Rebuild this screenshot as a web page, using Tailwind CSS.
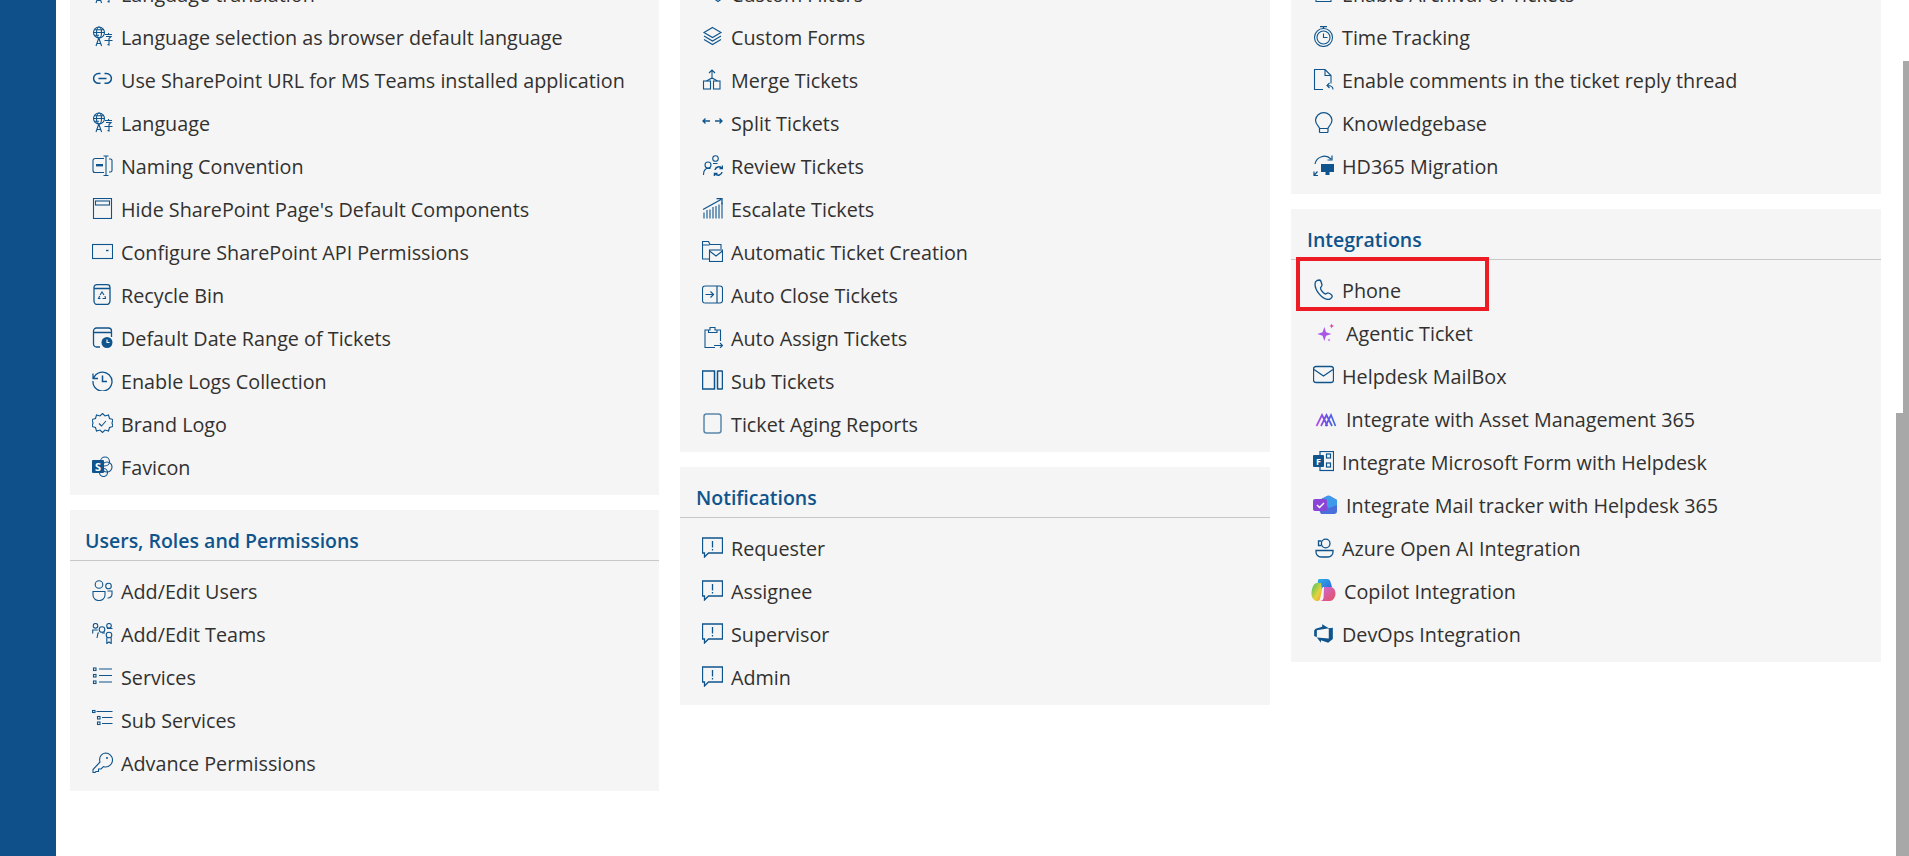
<!DOCTYPE html>
<html lang="en">
<head>
  <meta charset="UTF-8" />
  <title>Helpdesk Settings</title>
  <script src="https://cdn.jsdelivr.net/npm/@tailwindcss/browser@4"></script>
</head>
<body class="bg-white overflow-hidden font-['Open_Sans',sans-serif] text-[#323130]">
  <!-- icon sprites, 21px box -->
  <svg class="hidden" xmlns="http://www.w3.org/2000/svg">
    <symbol id="i-lang" viewBox="0 0 21 21"><circle cx="7" cy="6.5" r="5.5"/><ellipse cx="7" cy="6.5" rx="2.5" ry="5.5"/><path d="M1.5 6.5h11M2 3.8h10M2 9.2h5M4 20l2.8-8 2.8 8M5 17.5h3.6M13 8.5h7M16.5 7v1.500M14 10.5h5l-2 2V19l-1.5-.5M12.5 14.5h8"/></symbol>
    <symbol id="i-link" viewBox="0 0 21 21"><path d="M8.5 4.5h-2a4.9 4.9 0 0 0 0 9.8h2M12.5 4.5h2a4.9 4.9 0 0 1 0 9.8h-2M6.5 9.4h8" stroke-width="1.500"/></symbol>
    <symbol id="i-naming" viewBox="0 0 21 21"><path d="M12 3.5H3a2 2 0 0 0-2 2v10a2 2 0 0 0 2 2h9M11.5 1h5M11.5 20.5h5M14 1v19.5M17 4h1.5A1.5 1.5 0 0 1 20 5.5v10a1.5 1.5 0 0 1-1.5 1.5H17"/><rect x="4" y="9" width="7" height="2.400" fill="#0f548c" stroke="none"/></symbol>
    <symbol id="i-page" viewBox="0 0 21 21"><rect x="1.5" y=".5" width="18" height="20"/><rect x="3.5" y="3" width="14" height="4"/></symbol>
    <symbol id="i-config" viewBox="0 0 21 21"><rect x=".5" y="3.5" width="20" height="14"/><path d="M14 9.5h2.500" stroke-width="1.400"/></symbol>
    <symbol id="i-bin" viewBox="0 0 21 21"><path d="M1.500 4.500h17M2 3.500C2 1.500 3.500.7 5 .7h10c1.500 0 3 .8 3 2.800V17a3.500 3.500 0 0 1-3.500 3.500h-9A3.500 3.500 0 0 1 2 17z" stroke-width="1.300"/><path d="M8 11l2-3 2 3M13 12l.5 2.500h-3M8.500 14.500H6.500l1.200-2.500"/></symbol>
    <symbol id="i-date" viewBox="0 0 21 21"><path d="M8 20H4.500A3 3 0 0 1 1.500 17V4A3 3 0 0 1 4.500 1h12a3 3 0 0 1 3 3v6M1.500 5.500h18" stroke-width="1.300"/><circle cx="15" cy="15.500" r="5.500" fill="#0f548c" stroke="none"/><path d="M15 12.500v3h2.500" stroke="#fff"/></symbol>
    <symbol id="i-history" viewBox="0 0 21 21"><path d="M1 3.500v5h5M1.500 8.500A9.500 9.500 0 1 1 1 11" stroke-width="1.300"/><path d="M10.500 5.500v6h4.500" stroke-width="1.500"/></symbol>
    <symbol id="i-badge" viewBox="0 0 21 21"><path d="M10.500 .5l2.500 2.500 3.500-1 1 3.500 3.500 1-1 3.500 1 3.500-3.500 1-1 3.500-3.500-1-2.500 2.500-2.500-2.500-3.500 1-1-3.500-3.500-1 1-3.500-1-3.500 3.500-1 1-3.500 3.500 1z"/><path d="M7 10.500l2.500 2.500 4.500-5"/></symbol>
    <symbol id="i-sharepoint" viewBox="0 0 21 21"><circle cx="13" cy="5.500" r="4.500"/><circle cx="15" cy="11" r="5"/><circle cx="11.500" cy="16.500" r="4"/><rect y="4" width="12" height="13" rx="1" fill="#0f548c" stroke="none"/><text x="6" y="14.500" text-anchor="middle" font-size="11" font-weight="700" fill="#fff" stroke="none" font-family="Open Sans">S</text></symbol>
    <symbol id="i-users" viewBox="0 0 21 21"><circle cx="7" cy="4.500" r="3.800"/><circle cx="16.500" cy="6" r="2.800"/><path d="M1 11.500h12v3.500a5.500 5.500 0 0 1-5.500 5.500h-1A5.500 5.500 0 0 1 1 15z"/><path d="M15.500 11h4.500v3a4 4 0 0 1-4.500 4"/></symbol>
    <symbol id="i-teams" viewBox="0 0 21 21"><circle cx="3.500" cy="2.800" r="2.300"/><circle cx="17" cy="2.800" r="2.300"/><circle cx="10" cy="6.500" r="2.800"/><path d="M.7 10.500V7h5M20.500 5.500H15M5 15l1-5h1M13 10h-3"/><circle cx="17" cy="12" r="2.800"/><path d="M14.800 14.500v6l2.200-1.500 2.200 1.500v-6"/></symbol>
    <symbol id="i-list" viewBox="0 0 21 21"><rect x="1.500" y="2" width="2.500" height="2.500"/><rect x="1.500" y="8.500" width="2.500" height="2.500"/><rect x="1.500" y="15" width="2.500" height="2.500"/><path d="M7 3h13M7 9.500h13M7 16h13"/></symbol>
    <symbol id="i-sublist" viewBox="0 0 21 21"><rect x=".5" y="1.500" width="2.500" height="2"/><rect x="5.500" y="7.500" width="2.500" height="2.500"/><rect x="5.500" y="13" width="2.500" height="2.500"/><path d="M4.500 2.500H20.500M10 8.500h10.500M10 14.500h10.500"/></symbol>
    <symbol id="i-key" viewBox="0 0 21 21"><path d="M13.500 1a7 7 0 0 1 7 7 7 7 0 0 1-7 7c-1 0-1.500-.3-2-.4L9 17H6.500v2.500H4l-1 1H1v-3l7-7.500c-.2-.6-.4-1.300-.4-2.500A6.500 6.500 0 0 1 13.500 1z"/><circle cx="15" cy="6" r="1" fill="#0f548c" stroke="none"/></symbol>
    <symbol id="i-filter" viewBox="0 0 21 21"><path d="M1 2h13l-5 6v8l-3-2V8zM14 12l2-1.500 2 1.500 2 1v3l-2 1-2 1.500-2-1.500-2-1v-3z"/></symbol>
    <symbol id="i-layers" viewBox="0 0 21 21"><path d="M10.500 1.500l8.500 5-8.500 5-8.500-5zM2 10l8.500 5 8.500-5M2 13.500l8.500 5 8.500-5"/></symbol>
    <symbol id="i-merge" viewBox="0 0 21 21"><path d="M10 1v9M7 4l3-3 3 3M4.500 12l5.500-3 5.500 3"/><rect x="1.500" y="12" width="7" height="8"/><rect x="11.500" y="12" width="6.500" height="8"/></symbol>
    <symbol id="i-split" viewBox="0 0 21 21"><path d="M8 9H1M3.500 6.500L1 9l2.500 2.500M13 9h7M17.500 6.500L20 9l-2.500 2.500" stroke-width="1.300"/></symbol>
    <symbol id="i-review" viewBox="0 0 21 21"><circle cx="13.500" cy="3.500" r="2.800"/><circle cx="6" cy="10" r="3"/><path d="M1.500 20c0-3 1-5.500 3-6.500h4M11 8.500h4.500"/><path d="M13 15a3.800 3.800 0 0 1 6.500-2M20 17a3.800 3.800 0 0 1-6.500 2M20.500 10.500v3H17.500M12.500 21.500v-3h3" stroke-width="1.500"/></symbol>
    <symbol id="i-growth" viewBox="0 0 21 21"><path d="M1 11.500L19 1.500M14.500 .7h5.500v5.500" stroke-width="1.300"/><path d="M2 20.500v-6M5 20.500V12M8 20.500v-9M11 20.500V9M14 20.500V8M17 20.500V6.500M20 20.500V5" stroke-width="1.100"/></symbol>
    <symbol id="i-autocreate" viewBox="0 0 21 21"><path d="M7 18H.5V.500h6l1.500 3h11v4.500M.5 4h7"/><rect x="7.500" y="9" width="13" height="11.500"/><path d="M7.500 10l6.500 5 6.500-5"/></symbol>
    <symbol id="i-autoclose" viewBox="0 0 21 21"><rect x=".5" y="2" width="20" height="17" rx="2.500"/><path d="M15 2v17M3.500 10.500h8M8.500 7.500l3 3-3 3" stroke-width="1.200"/></symbol>
    <symbol id="i-assign" viewBox="0 0 21 21"><path d="M6.500 3H3v17.500h10M15 3h3.500v11M6.500 3h1.500V.500h5V3h2v2.500h-8.500zM12 18.500h8.500M18 16l2.500 2.500-2.500 2.500"/></symbol>
    <symbol id="i-subt" viewBox="0 0 21 21"><rect x=".5" y="1" width="12" height="18" stroke-width="1.500"/><rect x="15.500" y="1" width="5" height="18" rx=".5" stroke-width="1.500"/></symbol>
    <symbol id="i-square" viewBox="0 0 21 21"><rect x="2" y="1" width="17" height="19" rx="2.500" stroke-width="1.500"/></symbol>
    <symbol id="i-notify" viewBox="0 0 21 21"><path d="M.5 1h20v15H6.500L2.500 20v-4H.5z" stroke-width="1.300"/><path d="M10.500 4v6.500M10.500 12v1.500" stroke-width="1.300"/></symbol>
    <symbol id="i-archive" viewBox="0 0 21 21"><rect x="1" y="1" width="19" height="5"/><path d="M3 6v12.500h15V6M8 10h5"/></symbol>
    <symbol id="i-timer" viewBox="0 0 21 21"><path d="M7 .5h7M10.500 .5v2.500" stroke-width="1.300"/><circle cx="10.500" cy="11.500" r="9"/><circle cx="10.500" cy="11.500" r="6.500"/><path d="M10.500 7.500v4h4"/></symbol>
    <symbol id="i-comment" viewBox="0 0 21 21"><path d="M10 20.500H1.500V.500h10.500l6 6v8M12 .500v6h6M20 20.500c0-3-2-4-5.500-4M16.500 14l-2.500 2.500 2.500 2.500"/></symbol>
    <symbol id="i-bulb" viewBox="0 0 21 21"><path d="M8 20.500h6a1 1 0 0 0 1-1v-3c0-2 4-3.500 4-8.500A8.300 8.300 0 0 0 2.500 8c0 5 4 6.500 4 8.500v3a1 1 0 0 0 1.500 1zM6.500 16.500h8.500" stroke-width="1.200"/></symbol>
    <symbol id="i-migrate" viewBox="0 0 21 21"><path d="M2 9a9.500 9.500 0 0 1 16-5M19 .5V5h-4.500M1 20.500l3.500-4M1 16.500v4h4" stroke-width="1.200"/><rect x="8" y="9" width="13" height="8" fill="#0f548c" stroke="none"/><rect x="12.500" y="17" width="4" height="3" fill="#0f548c" stroke="none"/></symbol>
    <symbol id="i-phone" viewBox="0 0 21 21"><path d="M4 1.500l2.500-.5c1 0 1.500 1 2 3l.5 2c0 1.500-1.500 2-1.500 3 0 2 3.500 6 5 6 1 0 1.500-1.500 3-1l2 1c1.500 1 2 2 1.500 3s-2 2.500-3.500 2.500C9 20.500 2 11.500 2 5c0-1.500 1-3 2-3.500z" stroke-width="1.300"/></symbol>
    <symbol id="i-mail" viewBox="0 0 21 21"><rect x=".5" y="1.500" width="20" height="16" rx="2.500" stroke-width="1.300"/><path d="M1 4.500l9.500 6.500 9.500-6.500" stroke-width="1.300"/></symbol>
    <symbol id="i-form" viewBox="0 0 21 21"><rect x="7" y=".5" width="13.500" height="19" fill="#f5f5f5" stroke-width="1.200"/><rect x="13.500" y="3" width="4" height="4" stroke-width="1.200"/><rect x="13.500" y="12" width="4" height="4" stroke-width="1.200"/><rect y="4" width="11" height="12" rx="1" fill="#0f548c" stroke="none"/><text x="5.500" y="13.500" text-anchor="middle" font-size="9" font-weight="700" fill="#fff" stroke="none" font-family="Open Sans">F</text></symbol>
    <symbol id="i-azure" viewBox="0 0 21 21"><circle cx="12.700" cy="6.500" r="4.300" stroke-width="1.300"/><path d="M8.500 4H5.500v4.500h3M3 13.500h17v1.500a5 5 0 0 1-5 5H8a5 5 0 0 1-5-5z" stroke-width="1.300"/></symbol>
  </svg>

  <div class="flex h-screen">
    <aside class="w-14 shrink-0 bg-[#0f4f8a]"></aside>
    <main class="pl-[14px] flex-1 overflow-hidden relative">
      <div class="grid w-[1811px] grid-cols-[589px_590px_590px] gap-x-[21px] items-start -mt-[27px]">

        <!-- column 1 -->
        <div class="flex flex-col gap-[15px]">
          <section class="bg-[#f5f5f5] pb-[6px] text-[19.75px]">
            <div class="flex h-[43px] items-center pl-[22px]"><svg class="h-[21px] w-[21px] mr-[8px] -mt-[3px] shrink-0 fill-none stroke-[#0f548c] stroke-[1.1]"><use href="#i-lang"/></svg><span>Language translation</span></div>
            <div class="flex h-[43px] items-center pl-[22px]"><svg class="h-[21px] w-[21px] mr-[8px] -mt-[3px] shrink-0 fill-none stroke-[#0f548c] stroke-[1.1]"><use href="#i-lang"/></svg><span>Language selection as browser default language</span></div>
            <div class="flex h-[43px] items-center pl-[22px]"><svg class="h-[21px] w-[21px] mr-[8px] -mt-[3px] shrink-0 fill-none stroke-[#0f548c] stroke-[1.1]"><use href="#i-link"/></svg><span>Use SharePoint URL for MS Teams installed application</span></div>
            <div class="flex h-[43px] items-center pl-[22px]"><svg class="h-[21px] w-[21px] mr-[8px] -mt-[3px] shrink-0 fill-none stroke-[#0f548c] stroke-[1.1]"><use href="#i-lang"/></svg><span>Language</span></div>
            <div class="flex h-[43px] items-center pl-[22px]"><svg class="h-[21px] w-[21px] mr-[8px] -mt-[3px] shrink-0 fill-none stroke-[#0f548c] stroke-[1.1]"><use href="#i-naming"/></svg><span>Naming Convention</span></div>
            <div class="flex h-[43px] items-center pl-[22px]"><svg class="h-[21px] w-[21px] mr-[8px] -mt-[3px] shrink-0 fill-none stroke-[#0f548c] stroke-[1.1]"><use href="#i-page"/></svg><span>Hide SharePoint Page's Default Components</span></div>
            <div class="flex h-[43px] items-center pl-[22px]"><svg class="h-[21px] w-[21px] mr-[8px] -mt-[3px] shrink-0 fill-none stroke-[#0f548c] stroke-[1.1]"><use href="#i-config"/></svg><span>Configure SharePoint API Permissions</span></div>
            <div class="flex h-[43px] items-center pl-[22px]"><svg class="h-[21px] w-[21px] mr-[8px] -mt-[3px] shrink-0 fill-none stroke-[#0f548c] stroke-[1.1]"><use href="#i-bin"/></svg><span>Recycle Bin</span></div>
            <div class="flex h-[43px] items-center pl-[22px]"><svg class="h-[21px] w-[21px] mr-[8px] -mt-[3px] shrink-0 fill-none stroke-[#0f548c] stroke-[1.1]"><use href="#i-date"/></svg><span>Default Date Range of Tickets</span></div>
            <div class="flex h-[43px] items-center pl-[22px]"><svg class="h-[21px] w-[21px] mr-[8px] -mt-[3px] shrink-0 fill-none stroke-[#0f548c] stroke-[1.1]"><use href="#i-history"/></svg><span>Enable Logs Collection</span></div>
            <div class="flex h-[43px] items-center pl-[22px]"><svg class="h-[21px] w-[21px] mr-[8px] -mt-[3px] shrink-0 fill-none stroke-[#0f548c] stroke-[1.1]"><use href="#i-badge"/></svg><span>Brand Logo</span></div>
            <div class="flex h-[43px] items-center pl-[22px]"><svg class="h-[21px] w-[21px] mr-[8px] -mt-[3px] shrink-0 fill-none stroke-[#0f548c] stroke-[1.1]"><use href="#i-sharepoint"/></svg><span>Favicon</span></div>
          </section>

          <section class="bg-[#f5f5f5] pb-[6px] text-[19.75px]">
            <h2 class="flex h-[51px] items-center border-b border-[#c8c8c8] pl-[15px] pt-[11px] text-[19.5px] font-semibold text-[#0f548c]">Users, Roles and Permissions</h2>
            <div class="pt-[9px]">
              <div class="flex h-[43px] items-center pl-[22px]"><svg class="h-[21px] w-[21px] mr-[8px] -mt-[3px] shrink-0 fill-none stroke-[#0f548c] stroke-[1.1]"><use href="#i-users"/></svg><span>Add/Edit Users</span></div>
              <div class="flex h-[43px] items-center pl-[22px]"><svg class="h-[21px] w-[21px] mr-[8px] -mt-[3px] shrink-0 fill-none stroke-[#0f548c] stroke-[1.1]"><use href="#i-teams"/></svg><span>Add/Edit Teams</span></div>
              <div class="flex h-[43px] items-center pl-[22px]"><svg class="h-[21px] w-[21px] mr-[8px] -mt-[3px] shrink-0 fill-none stroke-[#0f548c] stroke-[1.1]"><use href="#i-list"/></svg><span>Services</span></div>
              <div class="flex h-[43px] items-center pl-[22px]"><svg class="h-[21px] w-[21px] mr-[8px] -mt-[3px] shrink-0 fill-none stroke-[#0f548c] stroke-[1.1]"><use href="#i-sublist"/></svg><span>Sub Services</span></div>
              <div class="flex h-[43px] items-center pl-[22px]"><svg class="h-[21px] w-[21px] mr-[8px] -mt-[3px] shrink-0 fill-none stroke-[#0f548c] stroke-[1.1]"><use href="#i-key"/></svg><span>Advance Permissions</span></div>
            </div>
          </section>
        </div>

        <!-- column 2 -->
        <div class="flex flex-col gap-[15px]">
          <section class="bg-[#f5f5f5] pb-[6px] text-[19.75px]">
            <div class="flex h-[43px] items-center pl-[22px]"><svg class="h-[21px] w-[21px] mr-[8px] -mt-[3px] shrink-0 fill-none stroke-[#0f548c] stroke-[1.1]"><use href="#i-filter"/></svg><span>Custom Filters</span></div>
            <div class="flex h-[43px] items-center pl-[22px]"><svg class="h-[21px] w-[21px] mr-[8px] -mt-[3px] shrink-0 fill-none stroke-[#0f548c] stroke-[1.1]"><use href="#i-layers"/></svg><span>Custom Forms</span></div>
            <div class="flex h-[43px] items-center pl-[22px]"><svg class="h-[21px] w-[21px] mr-[8px] -mt-[3px] shrink-0 fill-none stroke-[#0f548c] stroke-[1.1]"><use href="#i-merge"/></svg><span>Merge Tickets</span></div>
            <div class="flex h-[43px] items-center pl-[22px]"><svg class="h-[21px] w-[21px] mr-[8px] -mt-[3px] shrink-0 fill-none stroke-[#0f548c] stroke-[1.1]"><use href="#i-split"/></svg><span>Split Tickets</span></div>
            <div class="flex h-[43px] items-center pl-[22px]"><svg class="h-[21px] w-[21px] mr-[8px] -mt-[3px] shrink-0 fill-none stroke-[#0f548c] stroke-[1.1]"><use href="#i-review"/></svg><span>Review Tickets</span></div>
            <div class="flex h-[43px] items-center pl-[22px]"><svg class="h-[21px] w-[21px] mr-[8px] -mt-[3px] shrink-0 fill-none stroke-[#0f548c] stroke-[1.1]"><use href="#i-growth"/></svg><span>Escalate Tickets</span></div>
            <div class="flex h-[43px] items-center pl-[22px]"><svg class="h-[21px] w-[21px] mr-[8px] -mt-[3px] shrink-0 fill-none stroke-[#0f548c] stroke-[1.1]"><use href="#i-autocreate"/></svg><span>Automatic Ticket Creation</span></div>
            <div class="flex h-[43px] items-center pl-[22px]"><svg class="h-[21px] w-[21px] mr-[8px] -mt-[3px] shrink-0 fill-none stroke-[#0f548c] stroke-[1.1]"><use href="#i-autoclose"/></svg><span>Auto Close Tickets</span></div>
            <div class="flex h-[43px] items-center pl-[22px]"><svg class="h-[21px] w-[21px] mr-[8px] -mt-[3px] shrink-0 fill-none stroke-[#0f548c] stroke-[1.1]"><use href="#i-assign"/></svg><span>Auto Assign Tickets</span></div>
            <div class="flex h-[43px] items-center pl-[22px]"><svg class="h-[21px] w-[21px] mr-[8px] -mt-[3px] shrink-0 fill-none stroke-[#0f548c] stroke-[1.1]"><use href="#i-subt"/></svg><span>Sub Tickets</span></div>
            <div class="flex h-[43px] items-center pl-[22px]"><svg class="h-[21px] w-[21px] mr-[8px] -mt-[3px] shrink-0 fill-none stroke-[#5b87ab] stroke-[1.1]"><use href="#i-square"/></svg><span>Ticket Aging Reports</span></div>
          </section>

          <section class="bg-[#f5f5f5] pb-[6px] text-[19.75px]">
            <h2 class="flex h-[51px] items-center border-b border-[#c8c8c8] pl-[16px] pt-[11px] text-[19.5px] font-semibold text-[#0f548c]">Notifications</h2>
            <div class="pt-[9px]">
              <div class="flex h-[43px] items-center pl-[22px]"><svg class="h-[21px] w-[21px] mr-[8px] -mt-[3px] shrink-0 fill-none stroke-[#0f548c] stroke-[1.1]"><use href="#i-notify"/></svg><span>Requester</span></div>
              <div class="flex h-[43px] items-center pl-[22px]"><svg class="h-[21px] w-[21px] mr-[8px] -mt-[3px] shrink-0 fill-none stroke-[#0f548c] stroke-[1.1]"><use href="#i-notify"/></svg><span>Assignee</span></div>
              <div class="flex h-[43px] items-center pl-[22px]"><svg class="h-[21px] w-[21px] mr-[8px] -mt-[3px] shrink-0 fill-none stroke-[#0f548c] stroke-[1.1]"><use href="#i-notify"/></svg><span>Supervisor</span></div>
              <div class="flex h-[43px] items-center pl-[22px]"><svg class="h-[21px] w-[21px] mr-[8px] -mt-[3px] shrink-0 fill-none stroke-[#0f548c] stroke-[1.1]"><use href="#i-notify"/></svg><span>Admin</span></div>
            </div>
          </section>
        </div>

        <!-- column 3 -->
        <div class="flex flex-col gap-[15px]">
          <section class="bg-[#f5f5f5] pb-[6px] text-[19.75px]">
            <div class="flex h-[43px] items-center pl-[22px]"><svg class="h-[21px] w-[21px] mr-[8px] -mt-[3px] shrink-0 fill-none stroke-[#0f548c] stroke-[1.1]"><use href="#i-archive"/></svg><span>Enable Archival of Tickets</span></div>
            <div class="flex h-[43px] items-center pl-[22px]"><svg class="h-[21px] w-[21px] mr-[8px] -mt-[3px] shrink-0 fill-none stroke-[#0f548c] stroke-[1.1]"><use href="#i-timer"/></svg><span>Time Tracking</span></div>
            <div class="flex h-[43px] items-center pl-[22px]"><svg class="h-[21px] w-[21px] mr-[8px] -mt-[3px] shrink-0 fill-none stroke-[#0f548c] stroke-[1.1]"><use href="#i-comment"/></svg><span>Enable comments in the ticket reply thread</span></div>
            <div class="flex h-[43px] items-center pl-[22px]"><svg class="h-[21px] w-[21px] mr-[8px] -mt-[3px] shrink-0 fill-none stroke-[#0f548c] stroke-[1.1]"><use href="#i-bulb"/></svg><span>Knowledgebase</span></div>
            <div class="flex h-[43px] items-center pl-[22px]"><svg class="h-[21px] w-[21px] mr-[8px] -mt-[3px] shrink-0 fill-none stroke-[#0f548c] stroke-[1.1]"><use href="#i-migrate"/></svg><span>HD365 Migration</span></div>
          </section>

          <section class="relative bg-[#f5f5f5] pb-[6px] text-[19.75px]">
            <h2 class="flex h-[51px] items-center border-b border-[#c8c8c8] pl-[16px] pt-[11px] text-[19.5px] font-semibold text-[#0f548c]">Integrations</h2>
            <div class="pt-[9px]">
              <div class="flex h-[43px] items-center pl-[22px]"><svg class="h-[21px] w-[21px] mr-[8px] -mt-[3px] shrink-0 fill-none stroke-[#0f548c] stroke-[1.1]"><use href="#i-phone"/></svg><span>Phone</span></div>
              <div class="flex h-[43px] items-center pl-[22px]">
                <svg class="h-[21px] w-[21px] mr-[12px] -mt-[3px] shrink-0" viewBox="0 0 21 21"><path d="M11.300 5l1.700 5.300 5.300 1.700-5.300 1.700-1.700 5.300-1.700-5.300L4.300 12l5.300-1.700z" fill="#a855e8"/><path d="M18.700 1.500l.7 1.800 1.600.7-1.600.7-.7 1.800-.7-1.800-1.700-.7 1.700-.7z" fill="#d946a8"/><path d="M16 16.500l.5 1 1 .5-1 .5-.5 1-.5-1-1-.5 1-.5z" fill="#b76ae0"/></svg>
                <span>Agentic Ticket</span>
              </div>
              <div class="flex h-[43px] items-center pl-[22px]"><svg class="h-[21px] w-[21px] mr-[8px] -mt-[3px] shrink-0 fill-none stroke-[#0f548c] stroke-[1.1]"><use href="#i-mail"/></svg><span>Helpdesk MailBox</span></div>
              <div class="flex h-[43px] items-center pl-[22px]">
                <svg class="h-[21px] w-[24px] mr-[9px] -mt-[3px] shrink-0" viewBox="0 0 24 21"><defs><linearGradient id="asset-grad" gradientUnits="userSpaceOnUse" x1="3" y1="0" x2="23" y2="0"><stop offset="0" stop-color="#c04ce0"/><stop offset=".5" stop-color="#6a4de8"/><stop offset="1" stop-color="#3b6fd8"/></linearGradient></defs><path d="M3.500 18L9 7l5.500 11M8 18L13.500 7 19 18M12.500 18L18 7l4.500 11" fill="none" stroke="url(#asset-grad)" stroke-width="1.700"/></svg>
                <span>Integrate with Asset Management 365</span>
              </div>
              <div class="flex h-[43px] items-center pl-[22px]"><svg class="h-[21px] w-[21px] mr-[8px] -mt-[3px] shrink-0 fill-none stroke-[#0f548c] stroke-[1.1]"><use href="#i-form"/></svg><span>Integrate Microsoft Form with Helpdesk</span></div>
              <div class="flex h-[43px] items-center pl-[22px]">
                <svg class="h-[21px] w-[24px] mr-[9px] -mt-[3px] shrink-0" viewBox="0 0 24 21"><path d="M2 8l12-6c1-.5 2-.5 3 0l7 4v11a3 3 0 0 1-3 3H8z" fill="#4a6fdc"/><path d="M14 2c1-.5 2-.5 3 0l7 4v5l-8 3-8-8z" fill="#3f9bea"/><rect y="5" width="14" height="12" rx="2" fill="#8a45d6"/><path d="M4 11l2.500 2.500L11 9" fill="none" stroke="#fff" stroke-width="1.400"/></svg>
                <span>Integrate Mail tracker with Helpdesk 365</span>
              </div>
              <div class="flex h-[43px] items-center pl-[22px]"><svg class="h-[21px] w-[21px] mr-[8px] -mt-[3px] shrink-0 fill-none stroke-[#0f548c] stroke-[1.1]"><use href="#i-azure"/></svg><span>Azure Open AI Integration</span></div>
              <div class="flex h-[43px] items-center pl-[20px]">
                <svg class="h-[25px] w-[25px] mr-[8px] -mt-[3px] shrink-0" viewBox="0 0 25 25"><defs><linearGradient id="cop-a" x1="0" y1="0" x2="1" y2="1"><stop offset="0" stop-color="#2bb0e8"/><stop offset="1" stop-color="#2f5fd8"/></linearGradient><linearGradient id="cop-b" x1="0" y1="0" x2="1" y2="1"><stop offset="0" stop-color="#3fc46a"/><stop offset=".6" stop-color="#e8d23a"/><stop offset="1" stop-color="#f29a2e"/></linearGradient><linearGradient id="cop-c" x1="0" y1="0" x2="1" y2="1"><stop offset="0" stop-color="#c968e0"/><stop offset="1" stop-color="#e8505c"/></linearGradient></defs><path d="M8 1h8c2 0 3 1 3.500 3L21 9H12L9 14 7 6c-.5-2 0-5 1-5z" fill="url(#cop-a)"/><path d="M6 5h4l1 7-2 9c-.4 1.500-1.500 2-3 2-3 0-5.500-3-5.500-7.500C.5 10 3 5 6 5z" fill="url(#cop-b)"/><path d="M13 9h6.500c3 0 5 3 5 6.500 0 4-3 7.500-5.500 7.500H9c2 0 3-1 3.500-3z" fill="url(#cop-c)"/></svg>
                <span>Copilot Integration</span>
              </div>
              <div class="flex h-[43px] items-center pl-[22px]">
                <svg class="h-[21px] w-[21px] mr-[8px] -mt-[3px] shrink-0 fill-[#0f548c]" viewBox="0 0 18 18"><path d="M17 4v9.740l-4 3.280-6.200-2.260V17L3.290 12.410l10.230.8V4.440zm-3.410.49L7.850 1v2.290L2.220 4.940 1 6.500v4.630l2.290 1V6.210z"/></svg>
                <span>DevOps Integration</span>
              </div>
            </div>
            <!-- red highlight around Phone -->
            <div class="absolute left-[5px] top-[48px] h-[54px] w-[193px] border-[4px] border-[#ed1c24]"></div>
          </section>
        </div>
      </div>

      <!-- scrollbar remains -->
      <div class="absolute right-0 top-[61px] h-[352px] w-[6px] bg-[#a8a8a8]"></div>
      <div class="absolute right-0 top-[413px] bottom-0 w-[13px] bg-[#a8a8a8]"></div>
    </main>
  </div>
</body>
</html>
